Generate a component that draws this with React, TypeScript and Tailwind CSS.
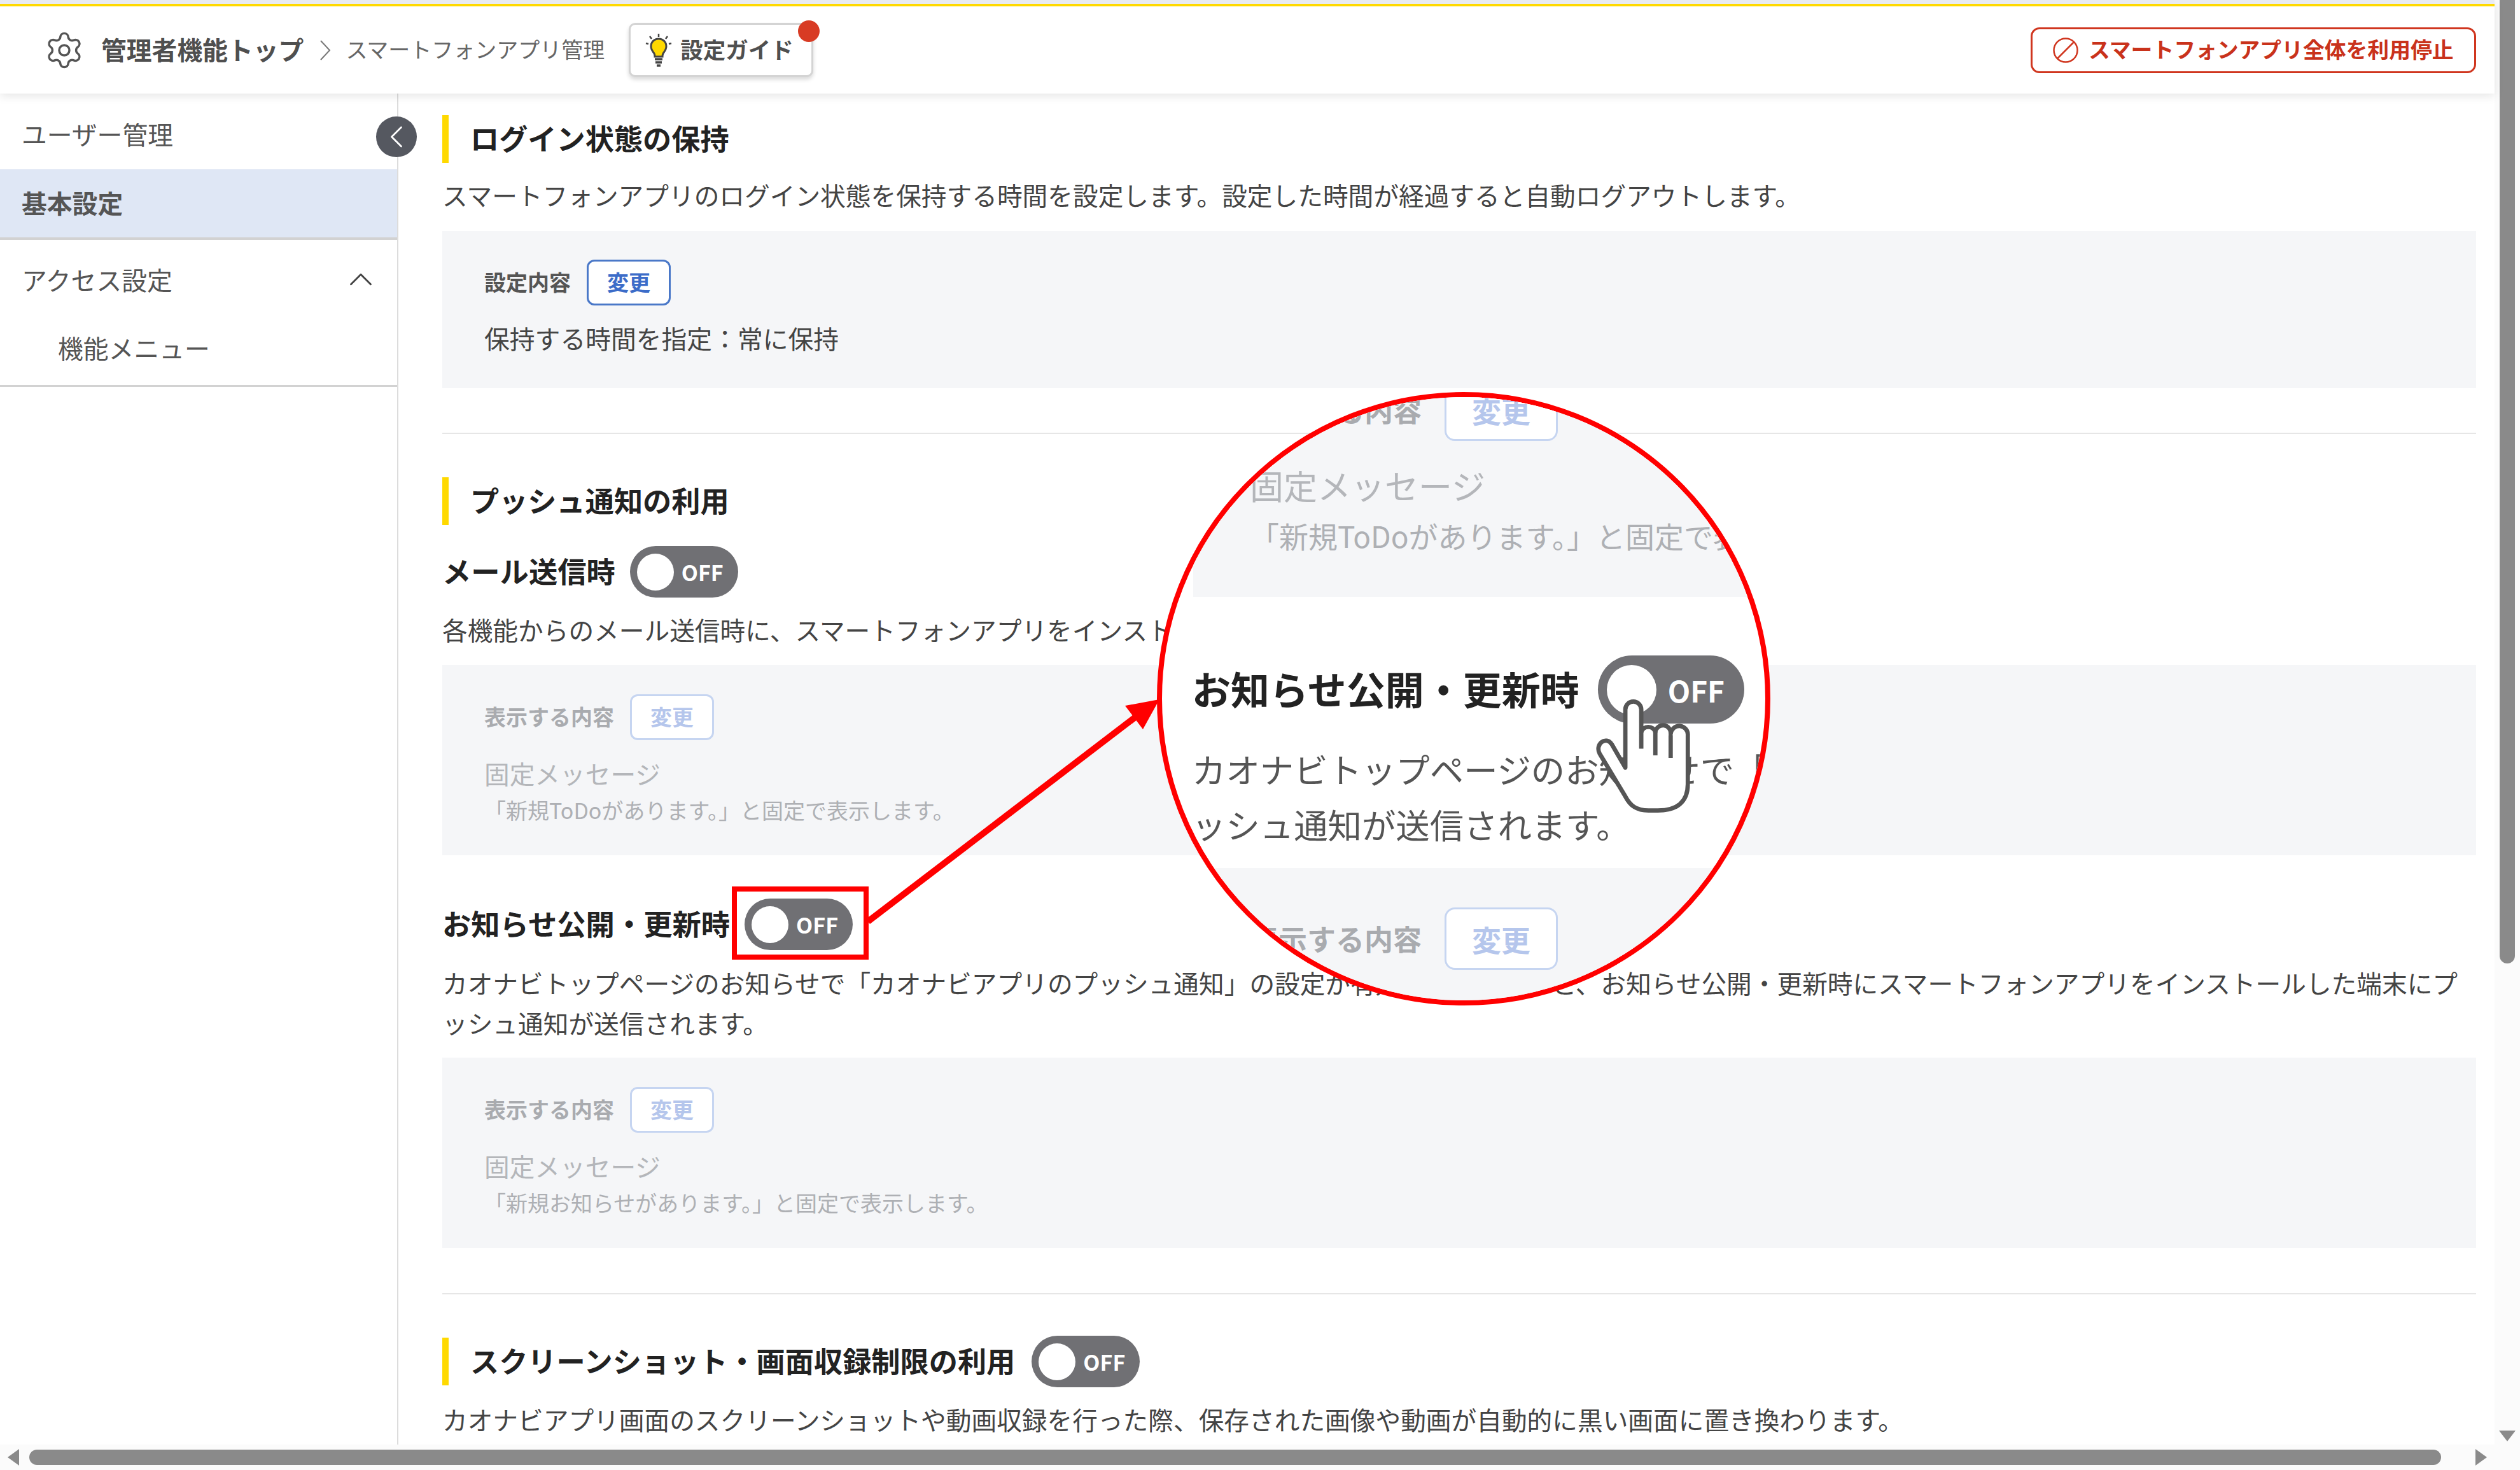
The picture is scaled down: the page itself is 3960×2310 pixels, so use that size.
import { ChevronLeft, ChevronUp, Settings } from "lucide-react";

function Toggle({ big }: { big?: boolean }) {
  if (big) {
    return (
      <div className="flex h-[107px] w-[230px] shrink-0 items-center rounded-full bg-[#707074] pl-[14px]">
        <div className="h-[78px] w-[78px] rounded-full bg-white" />
        <span className="ml-[18px] text-[46px] font-bold leading-none text-white">OFF</span>
      </div>
    );
  }
  return (
    <div className="flex h-[81px] w-[170px] shrink-0 items-center rounded-full bg-[#707074] pl-[11px]">
      <div className="h-[58px] w-[58px] rounded-full bg-white" />
      <span className="ml-[12px] text-[34px] font-bold leading-none text-white">OFF</span>
    </div>
  );
}

function SectionTitle({ children }: { children: React.ReactNode }) {
  return (
    <div className="flex h-[75px] items-center border-l-[10px] border-[#ffd900] pb-[4px] pl-[34px] text-[45.2px] font-bold text-[#222]">
      {children}
    </div>
  );
}

function EditRow({ label, disabled }: { label: string; disabled?: boolean }) {
  return (
    <div className="flex h-[72px] items-center gap-[25px]">
      <span className={`pb-[4px] text-[34px] font-bold ${disabled ? "text-[#a9abaf]" : "text-[#555]"}`}>{label}</span>
      <div
        className={`flex h-[72px] w-[132px] items-center justify-center rounded-[12px] border-[3px] bg-white pb-[3px] text-[34px] font-bold ${
          disabled ? "border-[#c6d5f1] text-[#b5c6ec]" : "border-[#4a78c8] text-[#3c6cc8]"
        }`}
      >
        変更
      </div>
    </div>
  );
}

function MutedPanel({ note }: { note: string }) {
  return (
    <div className="bg-[#f5f6f8] pb-[46px] pl-[66px] pt-[46px]">
      <EditRow label="表示する内容" disabled />
      <div className="mt-[20px] text-[39.7px] leading-[63px] text-[#b4b6ba]">固定メッセージ</div>
      <div className="mt-[2px] text-[34px] leading-[50px] text-[#aeb0b4]">{note}</div>
    </div>
  );
}

function BulbIcon() {
  return (
    <svg width="42" height="52" viewBox="0 0 42 52" fill="none">
      <path d="M21 8c-7 0-12 5-12 12 0 5 3 8 5 11 1 2 1 4 1 5h12c0-1 0-3 1-5 2-3 5-6 5-11 0-7-5-12-12-12z" fill="#ffd900" stroke="#444" strokeWidth="3" />
      <path d="M15 40h12M16 45h10M18 50h6" stroke="#444" strokeWidth="3.5" />
      <path d="M21 0v5M7 4l3 4M35 4l-3 4M1 15l4 1M41 15l-4 1" stroke="#444" strokeWidth="2.5" />
    </svg>
  );
}

function Magnifier() {
  return (
    <div className="absolute left-[1818px] top-[616px] h-[964px] w-[964px] overflow-hidden rounded-full border-[8px] border-[#ff0000] bg-white">
      <div className="ml-[49px] h-[314px] bg-[#f5f6f8] pl-[89px]">
        <div className="flex h-[98px] -translate-y-[29px] items-center gap-[36px]">
          <span className="text-[45px] font-bold text-[#a9abaf]">表示する内容</span>
          <div className="flex h-[98px] w-[178px] items-center justify-center rounded-[16px] border-[3px] border-[#c6d5f1] bg-white text-[46px] font-bold text-[#b5c6ec]">
            変更
          </div>
        </div>
        <div className="-mt-[3px] whitespace-nowrap text-[53px] leading-[86px] text-[#b4b6ba]">固定メッセージ</div>
        <div className="mt-[2px] whitespace-nowrap text-[46px] leading-[68px] text-[#aeb0b4]">「新規ToDoがあります。」と固定で表示します。</div>
      </div>
      <div className="mt-[92px] flex items-center gap-[29px] pl-[47px]">
        <span className="whitespace-nowrap pb-[4px] text-[61px] font-bold text-[#222]">お知らせ公開・更新時</span>
        <Toggle big />
      </div>
      <div className="mt-[27px] whitespace-nowrap pl-[47px] text-[53.4px] leading-[87px] text-[#555]">
        カオナビトップページのお知らせで「カオナビアプリのプッシュ通知」
        <br />
        ッシュ通知が送信されます。
      </div>
      <div className="ml-[49px] mt-[26px] h-[300px] bg-[#f5f6f8] pl-[89px] pt-[62px]">
        <div className="flex h-[98px] items-center gap-[36px]">
          <span className="text-[45px] font-bold text-[#a9abaf]">表示する内容</span>
          <div className="flex h-[98px] w-[178px] items-center justify-center rounded-[16px] border-[3px] border-[#c6d5f1] bg-white text-[46px] font-bold text-[#b5c6ec]">
            変更
          </div>
        </div>
      </div>
    </div>
  );
}

function Annotations() {
  return (
    <>
      <div className="absolute left-[1150px] top-[1393px] h-[115px] w-[215px] border-[8px] border-[#ff0000]" />
      <svg className="absolute left-[1360px] top-[1090px]" width="470" height="370" viewBox="1360 1090 470 370">
        <path d="M1364 1448L1784 1127" stroke="#ff0000" strokeWidth="10" fill="none" />
        <path d="M1822 1099L1768 1109L1796 1146Z" fill="#ff0000" />
      </svg>
      <Magnifier />
      {/* hand cursor over the magnified toggle */}
      <svg className="absolute left-[2506px] top-[1099px]" width="153" height="181" viewBox="-3 -3 159 187">
        <path
          d="M47 108V13a13 13 0 0 1 26 0V50a12 12 0 0 1 23 0a12 12 0 0 1 25 3a14 14 0 0 1 28 2V135C149 165 130 178 100 178H85C65 178 55 170 47 155L5 85C-3 70 15 55 25 70Z"
          fill="#fff"
          stroke="#555"
          strokeWidth="7"
          strokeLinejoin="round"
        />
        <path d="M73 50V77M96 50V88M121 55V92" stroke="#555" strokeWidth="7" />
      </svg>
    </>
  );
}

export default function App() {
  return (
    <div className="relative flex h-[2310px] w-[3960px] overflow-hidden bg-white font-['Noto_Sans_CJK_JP','Noto_Sans',sans-serif] text-[#444]">
      <div className="flex w-[3920px] flex-col">
        {/* top bar */}
        <div className="relative z-10 h-[147px] shrink-0 bg-white shadow-[0_4px_14px_rgba(0,0,0,0.1)]">
          <div className="h-[6px] bg-[#e9ebf1]" />
          <div className="h-[4px] bg-[#ffd900]" />
          <div className="flex h-[137px] items-center justify-between pr-[29px]">
            <div className="flex items-center pl-[69px]">
              <Settings className="h-[64px] w-[64px] text-[#555]" strokeWidth={1.3} />
              <span className="ml-[26px] pb-[4px] text-[39.8px] font-bold text-[#4f4f4f]">管理者機能トップ</span>
              <svg className="ml-[25px]" width="18" height="32" viewBox="0 0 18 32" fill="none">
                <path d="M2 1l14 15L2 31" stroke="#777" strokeWidth="2" />
              </svg>
              <span className="ml-[23px] pb-[4px] text-[34px] text-[#666]">スマートフォンアプリ管理</span>
              <div className="relative ml-[38px] flex h-[85px] w-[290px] items-center gap-[13px] rounded-[10px] border-[3px] border-[#d4d4d4] bg-white pl-[23px] shadow-[0_4px_6px_rgba(0,0,0,0.15)]">
                <BulbIcon />
                <span className="pb-[4px] text-[35.5px] font-bold text-[#4f4f4f]">設定ガイド</span>
                <div className="absolute left-[263px] top-[-7px] h-[34px] w-[34px] rounded-full bg-[#d83b24]" />
              </div>
            </div>
            <div className="flex h-[72px] w-[700px] items-center gap-[16px] rounded-[14px] border-[3px] border-[#d0361f] pl-[32px] text-[33.8px] font-bold text-[#c9321b]">
              <svg width="40" height="40" viewBox="0 0 40 40" fill="none">
                <circle cx="20" cy="20" r="18.5" stroke="#d0361f" strokeWidth="2.5" />
                <path d="M33 7L7 33" stroke="#d0361f" strokeWidth="2.5" />
              </svg>
              <span className="pb-[3px]">スマートフォンアプリ全体を利用停止</span>
            </div>
          </div>
        </div>

        <div className="flex min-h-0 flex-1">
          {/* side menu */}
          <nav className="w-[626px] shrink-0 border-r-2 border-[#dcdcdc] text-[39.8px] text-[#555]">
            <div className="flex h-[119px] items-center pl-[34px] pt-[6px]">ユーザー管理</div>
            <div className="flex h-[111px] items-center border-b-4 border-[#d2d2d2] bg-[#dfe7f5] pb-[4px] pl-[34px] font-bold">基本設定</div>
            <div className="flex h-[128px] items-center justify-between pb-[4px] pl-[34px] pr-[26px]">
              アクセス設定
              <ChevronUp className="h-[62px] w-[62px] text-[#444]" strokeWidth={1.1} />
            </div>
            <div className="border-b-[3px] border-[#d2d2d2] pb-[16px]">
              <div className="flex h-[84px] items-center pb-[2px] pl-[91px]">機能メニュー</div>
            </div>
          </nav>

          <main className="min-w-0 flex-1 pl-[69px] pr-[29px] pt-[34px]">
            <SectionTitle>ログイン状態の保持</SectionTitle>
            <p className="mt-[18px] whitespace-nowrap text-[39.7px] leading-[63px]">
              スマートフォンアプリのログイン状態を保持する時間を設定します。設定した時間が経過すると自動ログアウトします。
            </p>
            <div className="mt-[26px] bg-[#f5f6f8] pb-[48px] pl-[66px] pt-[45px]">
              <EditRow label="設定内容" />
              <div className="mt-[19px] text-[39.8px] leading-[63px]">保持する時間を指定：常に保持</div>
            </div>
            <hr className="mt-[70px] border-t-2 border-[#e6e6e6]" />

            <div className="mt-[68px]">
              <SectionTitle>プッシュ通知の利用</SectionTitle>
            </div>
            <div className="mt-[33px] flex items-center gap-[23px]">
              <span className="pb-[4px] text-[45.3px] font-bold text-[#222]">メール送信時</span>
              <Toggle />
            </div>
            <p className="mt-[18px] whitespace-nowrap text-[39.7px] leading-[63px]">
              各機能からのメール送信時に、スマートフォンアプリをインストールした端末にプッシュ通知が送信されます。
            </p>
            <div className="mt-[25px]">
              <MutedPanel note="「新規ToDoがあります。」と固定で表示します。" />
            </div>

            <div className="mt-[68px] flex items-center gap-[23px]">
              <span className="pb-[4px] text-[45.3px] font-bold text-[#222]">お知らせ公開・更新時</span>
              <Toggle />
            </div>
            <p className="mt-[19px] whitespace-nowrap text-[39.7px] leading-[63px]">
              カオナビトップページのお知らせで「カオナビアプリのプッシュ通知」の設定が有効になっていると、お知らせ公開・更新時にスマートフォンアプリをインストールした端末にプ
              <br />
              ッシュ通知が送信されます。
            </p>
            <div className="mt-[24px]">
              <MutedPanel note="「新規お知らせがあります。」と固定で表示します。" />
            </div>
            <hr className="mt-[71px] border-t-2 border-[#e6e6e6]" />

            <div className="mt-[65px] flex items-center gap-[26px]">
              <SectionTitle>スクリーンショット・画面収録制限の利用</SectionTitle>
              <Toggle />
            </div>
            <p className="mt-[18px] whitespace-nowrap text-[39.7px] leading-[63px]">
              カオナビアプリ画面のスクリーンショットや動画収録を行った際、保存された画像や動画が自動的に黒い画面に置き換わります。
            </p>
          </main>
        </div>

        {/* horizontal scrollbar */}
        <div className="flex h-[40px] shrink-0 items-center bg-[#fbfbfb] pl-[12px]">
          <svg width="18" height="26" viewBox="0 0 18 26"><path d="M18 0V26L0 13Z" fill="#8a8a8a" /></svg>
          <div className="ml-[16px] h-[24px] w-[3790px] rounded-full bg-[#8a8a8a]" />
          <svg className="ml-[54px]" width="18" height="26" viewBox="0 0 18 26"><path d="M0 0V26L18 13Z" fill="#8a8a8a" /></svg>
        </div>
      </div>

      {/* vertical scrollbar */}
      <div className="flex w-[40px] shrink-0 flex-col bg-[#fbfbfb] pb-[45px] pl-[7px]">
        <div className="ml-[1px] h-[1514px] w-[24px] rounded-b-full bg-[#8a8a8a]" />
        <svg className="mt-auto" width="26" height="17" viewBox="0 0 26 17"><path d="M0 0H26L13 17Z" fill="#8a8a8a" /></svg>
      </div>

      <div className="absolute left-[591px] top-[183px] z-20 flex h-[64px] w-[64px] items-center justify-center rounded-full bg-[#555860]">
        <ChevronLeft className="h-[60px] w-[60px] text-white" strokeWidth={1.1} />
      </div>
      <div className="z-30">
        <Annotations />
      </div>
    </div>
  );
}
